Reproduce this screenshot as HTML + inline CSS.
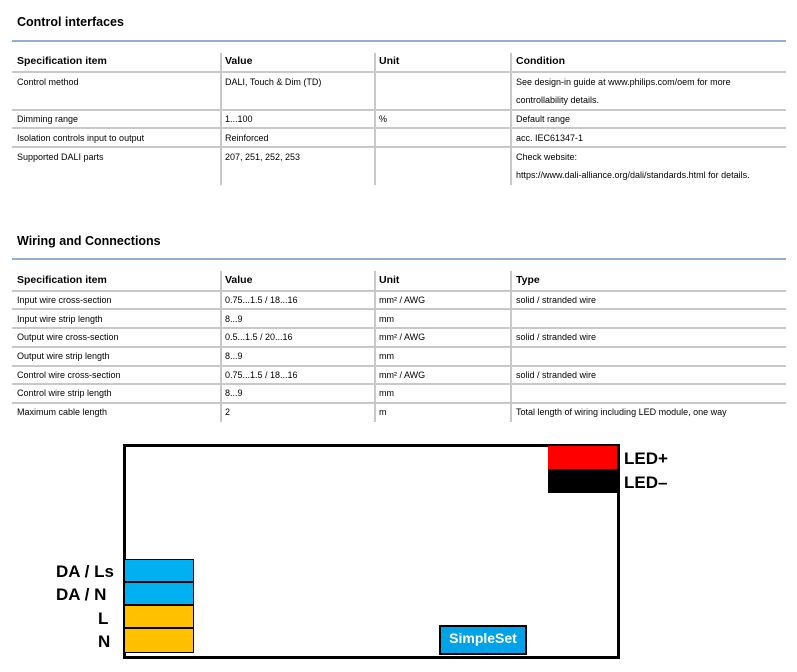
<!DOCTYPE html>
<html><head><meta charset="utf-8"><style>
body{margin:0;width:797px;height:672px;background:#fff;position:relative;overflow:hidden;font-family:"Liberation Sans",sans-serif;color:#000}
.a{position:absolute;white-space:nowrap}
.t{font-size:12.5px;font-weight:bold}
.h{font-size:10.5px;font-weight:bold}
.s{font-size:9px}
.hl{position:absolute;left:12px;width:774px;height:2px;background:#c8c8c8}
.vl{position:absolute;width:2px;background:#c8c8c8}
.bl{position:absolute;left:12px;width:774px;height:2px;background:#94aed0}
.big{font-size:17px;font-weight:bold}
</style></head><body>
<div class="a t" style="left:17px;top:15px">Control interfaces</div>
<div class="bl" style="top:40px"></div>
<div class="vl" style="left:220px;top:53px;height:132px"></div>
<div class="vl" style="left:374px;top:53px;height:132px"></div>
<div class="vl" style="left:510px;top:53px;height:132px"></div>
<div class="a h" style="left:17px;top:55px">Specification item</div>
<div class="a h" style="left:225px;top:55px">Value</div>
<div class="a h" style="left:379px;top:55px">Unit</div>
<div class="a h" style="left:516px;top:55px">Condition</div>
<div class="hl" style="top:71px"></div>
<div class="a s" style="left:17px;top:77px">Control method</div>
<div class="a s" style="left:225px;top:77px">DALI, Touch &amp; Dim (TD)</div>
<div class="a s" style="left:516px;top:77px">See design-in guide at www.philips.com/oem for more</div>
<div class="a s" style="left:516px;top:95px">controllability details.</div>
<div class="hl" style="top:109px"></div>
<div class="a s" style="left:17px;top:114px">Dimming range</div>
<div class="a s" style="left:225px;top:114px">1...100</div>
<div class="a s" style="left:379px;top:114px">%</div>
<div class="a s" style="left:516px;top:114px">Default range</div>
<div class="hl" style="top:127px"></div>
<div class="a s" style="left:17px;top:133px">Isolation controls input to output</div>
<div class="a s" style="left:225px;top:133px">Reinforced</div>
<div class="a s" style="left:516px;top:133px">acc. IEC61347-1</div>
<div class="hl" style="top:146px"></div>
<div class="a s" style="left:17px;top:152px">Supported DALI parts</div>
<div class="a s" style="left:225px;top:152px">207, 251, 252, 253</div>
<div class="a s" style="left:516px;top:152px">Check website:</div>
<div class="a s" style="left:516px;top:170px">https://www.dali-alliance.org/dali/standards.html for details.</div>

<div class="a t" style="left:17px;top:234px">Wiring and Connections</div>
<div class="bl" style="top:258px"></div>
<div class="vl" style="left:220px;top:271px;height:151px"></div>
<div class="vl" style="left:374px;top:271px;height:151px"></div>
<div class="vl" style="left:510px;top:271px;height:151px"></div>
<div class="a h" style="left:17px;top:274px">Specification item</div>
<div class="a h" style="left:225px;top:274px">Value</div>
<div class="a h" style="left:379px;top:274px">Unit</div>
<div class="a h" style="left:516px;top:274px">Type</div>
<div class="hl" style="top:290px"></div>
<div class="a s" style="left:17px;top:295px">Input wire cross-section</div>
<div class="a s" style="left:225px;top:295px">0.75...1.5 / 18...16</div>
<div class="a s" style="left:379px;top:295px">mm² / AWG</div>
<div class="a s" style="left:516px;top:295px">solid / stranded wire</div>
<div class="hl" style="top:308px"></div>
<div class="a s" style="left:17px;top:314px">Input wire strip length</div>
<div class="a s" style="left:225px;top:314px">8...9</div>
<div class="a s" style="left:379px;top:314px">mm</div>
<div class="hl" style="top:327px"></div>
<div class="a s" style="left:17px;top:332px">Output wire cross-section</div>
<div class="a s" style="left:225px;top:332px">0.5...1.5 / 20...16</div>
<div class="a s" style="left:379px;top:332px">mm² / AWG</div>
<div class="a s" style="left:516px;top:332px">solid / stranded wire</div>
<div class="hl" style="top:346px"></div>
<div class="a s" style="left:17px;top:351px">Output wire strip length</div>
<div class="a s" style="left:225px;top:351px">8...9</div>
<div class="a s" style="left:379px;top:351px">mm</div>
<div class="hl" style="top:365px"></div>
<div class="a s" style="left:17px;top:370px">Control wire cross-section</div>
<div class="a s" style="left:225px;top:370px">0.75...1.5 / 18...16</div>
<div class="a s" style="left:379px;top:370px">mm² / AWG</div>
<div class="a s" style="left:516px;top:370px">solid / stranded wire</div>
<div class="hl" style="top:383px"></div>
<div class="a s" style="left:17px;top:388px">Control wire strip length</div>
<div class="a s" style="left:225px;top:388px">8...9</div>
<div class="a s" style="left:379px;top:388px">mm</div>
<div class="hl" style="top:402px"></div>
<div class="a s" style="left:17px;top:407px">Maximum cable length</div>
<div class="a s" style="left:225px;top:407px">2</div>
<div class="a s" style="left:379px;top:407px">m</div>
<div class="a s" style="left:516px;top:407px">Total length of wiring including LED module, one way</div>

<div style="position:absolute;left:123px;top:444px;width:491px;height:209px;border:3px solid #000"></div>
<div style="position:absolute;left:548px;top:446px;width:69px;height:23px;background:#f00"></div>
<div style="position:absolute;left:548px;top:469px;width:69px;height:24px;background:#000"></div>
<div style="position:absolute;left:124px;top:559px;width:68px;height:21px;background:#00b0f0;border:1px solid #000"></div>
<div style="position:absolute;left:124px;top:582px;width:68px;height:21px;background:#00b0f0;border:1px solid #000"></div>
<div style="position:absolute;left:124px;top:605px;width:68px;height:21px;background:#ffc000;border:1px solid #000"></div>
<div style="position:absolute;left:124px;top:628px;width:68px;height:23px;background:#ffc000;border:1px solid #000"></div>
<div style="position:absolute;left:439px;top:625px;width:84px;height:26px;background:#00a2e8;border:2px solid #000"></div>
<div class="a" style="left:441px;top:630px;width:84px;text-align:center;font-size:14px;font-weight:bold;color:#fff">SimpleSet</div>
<div class="a big" style="left:624px;top:449px">LED+</div>
<div class="a big" style="left:624px;top:473px">LED–</div>
<div class="a big" style="left:56px;top:562px">DA / Ls</div>
<div class="a big" style="left:56px;top:585px">DA / N</div>
<div class="a big" style="left:98px;top:609px">L</div>
<div class="a big" style="left:98px;top:632px">N</div>
</body></html>
